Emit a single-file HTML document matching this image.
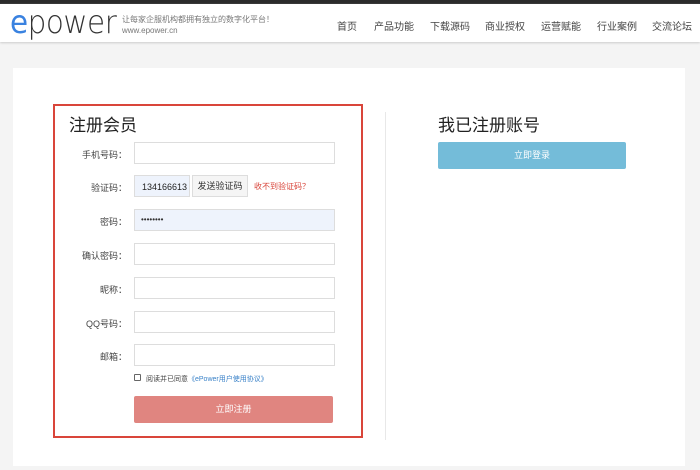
<!DOCTYPE html>
<html><head><meta charset="utf-8"><style>
*{margin:0;padding:0;box-sizing:border-box}
body{width:700px;height:470px;background:#f4f4f4;font-family:"Liberation Sans","Noto Sans CJK SC",sans-serif;position:relative;overflow:hidden;color:#333}
.top{position:absolute;left:0;top:0;width:700px;height:4px;background:#2b2b2b}
.hdr{position:absolute;left:0;top:4px;width:700px;height:38px;background:#fff;box-shadow:0 1px 2px #ccc}
.logo{position:absolute;left:10px;top:-1px;font-size:32px;color:#333;letter-spacing:-0.5px;line-height:38px;font-family:"DejaVu Sans",sans-serif;font-weight:200;transform:scaleX(0.92);transform-origin:left}
.logo b{color:#3a82e0;font-weight:normal}
.slog{position:absolute;left:122px;top:10px;font-size:8px;color:#777;line-height:11px}
.nav{position:absolute;top:14px;font-size:10px;color:#444}
.card{position:absolute;left:13px;top:68px;width:672px;height:398px;background:#fff}
.red{position:absolute;left:53px;top:104px;width:310px;height:334px;border:2px solid #d9453a}
.h{position:absolute;font-size:17px;color:#222}
.lab{position:absolute;width:80px;left:47px;text-align:right;font-size:9px;color:#444}
.in{position:absolute;left:134px;width:201px;height:22px;border:1px solid #ddd;background:#fff}
.div{position:absolute;left:385px;top:112px;width:1px;height:328px;background:#e8e8e8}
</style></head><body>
<div class="top"></div>
<div class="hdr">
<div class="logo"><b>e</b>power</div>
<div class="slog">让每家企服机构都拥有独立的数字化平台！<br>www.epower.cn</div>
<span class="nav" style="left:337px">首页</span>
<span class="nav" style="left:374px">产品功能</span>
<span class="nav" style="left:430px">下载源码</span>
<span class="nav" style="left:485px">商业授权</span>
<span class="nav" style="left:541px">运营赋能</span>
<span class="nav" style="left:597px">行业案例</span>
<span class="nav" style="left:652px">交流论坛</span>
</div>
<div class="card"></div>
<div class="div"></div>
<div class="red"></div>
<div class="h" style="left:69px;top:111px">注册会员</div>
<div class="lab" style="top:148px">手机号码：</div><div class="in" style="top:142px"></div>
<div class="lab" style="top:181px">验证码：</div>
<div class="in" style="top:175px;width:56px;background:#eef3fc;font-size:9px;padding:6px 0 0 7px;color:#222">134166613</div>
<div style="position:absolute;left:192px;top:175px;width:56px;height:22px;border:1px solid #ddd;background:#f5f5f5;font-size:9px;text-align:center;line-height:20px;color:#333">发送验证码</div>
<div style="position:absolute;left:254px;top:181px;font-size:8px;color:#d9453a">收不到验证码？</div>
<div class="lab" style="top:215px">密码：</div><div class="in" style="top:209px;background:#eef3fc;font-size:8px;padding:5px 0 0 6px">••••••••</div>
<div class="lab" style="top:249px">确认密码：</div><div class="in" style="top:243px"></div>
<div class="lab" style="top:283px">昵称：</div><div class="in" style="top:277px"></div>
<div class="lab" style="top:317px">QQ号码：</div><div class="in" style="top:311px"></div>
<div class="lab" style="top:350px">邮箱：</div><div class="in" style="top:344px"></div>
<div style="position:absolute;left:134px;top:374px;width:7px;height:7px;border:1px solid #666;border-radius:1px"></div>
<div style="position:absolute;left:146px;top:374px;font-size:7px;color:#444">阅读并已同意<span style="color:#3a82c8">《ePower用户使用协议》</span></div>
<div style="position:absolute;left:134px;top:396px;width:199px;height:27px;background:#e08580;border-radius:2px;color:#fff;font-size:9px;text-align:center;line-height:27px">立即注册</div>
<div class="h" style="left:438px;top:111px">我已注册账号</div>
<div style="position:absolute;left:438px;top:142px;width:188px;height:27px;background:#74bcd9;border-radius:2px;color:#fff;font-size:9px;text-align:center;line-height:27px">立即登录</div>
</body></html>
